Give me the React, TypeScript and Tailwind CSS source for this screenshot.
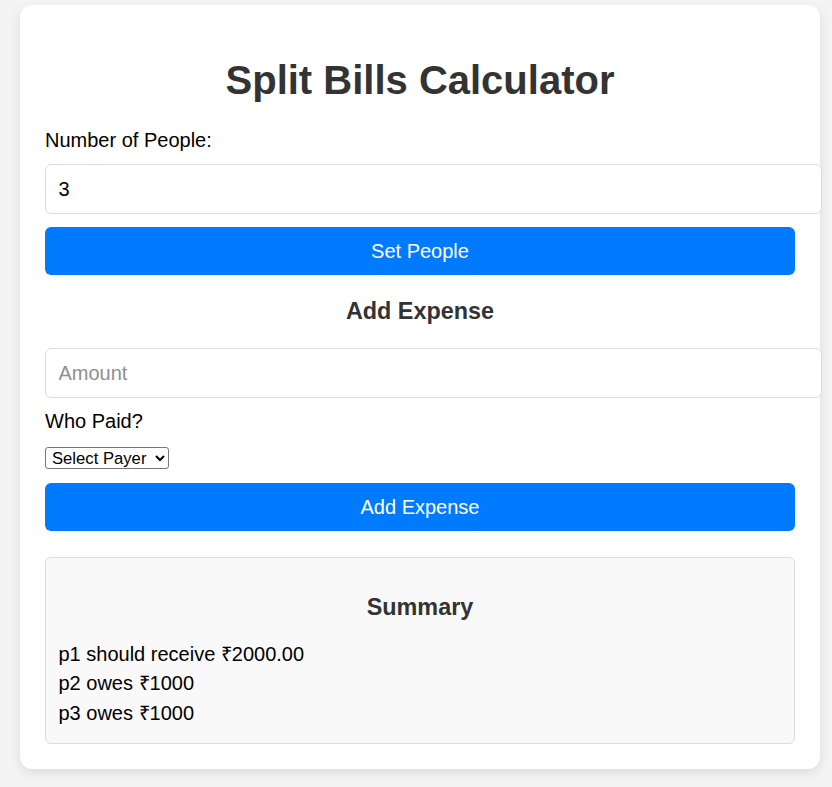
import React from "react";

export default function App() {
  return (
    <div
      className="min-h-screen bg-[#f4f4f4] pt-[5px] pl-[20px] pb-[20px]"
      style={{ fontFamily: '"Liberation Sans", Arial, sans-serif' }}
    >
      <div className="w-[800px] bg-white rounded-[12px] p-[25px] shadow-[0_4px_12px_rgba(0,0,0,0.1)] text-[20px] leading-[23px] text-black">
        <h1 className="mt-[27px] mb-[26px] text-center text-[40px] leading-[46px] font-bold text-[#333]">
          Split Bills Calculator
        </h1>
        <label className="block">Number of People:</label>
        <input
          type="number"
          defaultValue={3}
          className="block box-content w-full mt-[12px] p-[12.5px] h-[23px] border border-[#ddd] rounded-[6px] bg-white text-[20px] leading-[23px] outline-none [appearance:textfield] [&::-webkit-inner-spin-button]:appearance-none"
        />
        <button className="block w-full mt-[13px] h-[48px] rounded-[6px] bg-[#007bff] text-white text-[20px] leading-[23px]">
          Set People
        </button>
        <h3 className="mt-[23px] text-center text-[23.4px] leading-[27px] font-bold text-[#333]">
          Add Expense
        </h3>
        <input
          type="number"
          placeholder="Amount"
          className="block box-content w-full mt-[23px] p-[12.5px] h-[23px] border border-[#ddd] rounded-[6px] bg-white text-[20px] leading-[23px] outline-none placeholder:text-[#8f8f8f] [appearance:textfield] [&::-webkit-inner-spin-button]:appearance-none"
        />
        <label className="block mt-[12px]">Who Paid?</label>
        <select
          className="block mt-[14px] w-[124px] h-[22px] pl-[2px] border border-[#767676] rounded-[3px] bg-white text-[16.67px] leading-[20px] text-black"
          defaultValue=""
        >
          <option value="">Select Payer</option>
          <option value="p1">p1</option>
          <option value="p2">p2</option>
          <option value="p3">p3</option>
        </select>
        <button className="block w-full mt-[14px] h-[48px] rounded-[6px] bg-[#007bff] text-white text-[20px] leading-[23px]">
          Add Expense
        </button>
        <div className="mt-[26px] border border-[#ddd] rounded-[6px] bg-[#f9f9f9] px-[12.5px] pt-[12.5px] pb-[12px]">
          <h3 className="mt-[23px] mb-[22px] text-center text-[23.4px] leading-[27px] font-bold text-[#333]">
            Summary
          </h3>
          <p className="mb-[6.5px]">p1 should receive ₹2000.00</p>
          <p className="mb-[6.5px]">p2 owes ₹1000</p>
          <p className="mb-[6.5px]">p3 owes ₹1000</p>
        </div>
      </div>
    </div>
  );
}
